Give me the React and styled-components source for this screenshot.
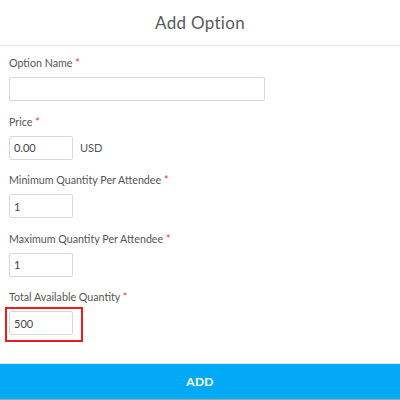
import React from "react"
import styled, { createGlobalStyle } from "styled-components"

const GlobalStyle = createGlobalStyle`
  html, body {
    margin: 0;
    padding: 0;
    background: #fff;
    font-family: Lato, "Open Sans", Arial, sans-serif;
  }
`

const Page = styled.div`
  width: 400px;
  height: 400px;
  display: flex;
  flex-direction: column;
  overflow: hidden;
`
const Header = styled.header`
  height: 45px;
  border-bottom: 1px solid #e6e6e6;
  display: flex;
  align-items: center;
  justify-content: center;
  >h1 {
    margin: 0;
    font-size: 17px;
    font-weight: 400;
    color: #5a5a5a;
    letter-spacing: 0.3px;
  }
`
const Form = styled.form`
  padding: 10px 9px 0;
`
const Field = styled.div`
  margin-bottom: 13.5px;
`
const Label = styled.label`
  display: block;
  font-size: 10.7px;
  line-height: 14px;
  color: #555;
  margin-bottom: 7px;
  >span {
    color: #e53935;
  }
`
const Row = styled.div`
  display: flex;
  align-items: center;
  gap: 7px;
`
const Input = styled.input`
  box-sizing: border-box;
  width: ${p => p.$wide ? "256px" : "64px"};
  height: 24px;
  border: 1px solid #d9d9d9;
  border-radius: 2px;
  padding: 0 4px;
  font-family: inherit;
  font-size: 11px;
  color: #444;
  outline: none;
`
const Unit = styled.span`
  font-size: 11px;
  color: #555;
`
const Highlight = styled.span`
  display: inline-block;
  border: 2px solid #ee1c1c;
  margin: -4px -10px -7px -4px;
  padding: 2px 8px 5px 2px;
  line-height: 0;
`
const Footer = styled.footer`
  margin-top: auto;
  border-top: 1px solid #e6e6e6;
`
const AddButton = styled.button`
  display: block;
  width: 100%;
  height: 36px;
  border: 0;
  border-bottom: 1px solid #9aa3a8;
  background: #02a9f4;
  color: #fff;
  font-family: inherit;
  font-weight: 700;
  font-size: 12px;
  letter-spacing: 0.3px;
  cursor: pointer;
`

const Required = ({ children }) => (
  <Label>{children} <span>*</span></Label>
)

export default function App() {
  return (
    <Page>
      <GlobalStyle />
      <Header><h1>Add Option</h1></Header>
      <Form>
        <Field>
          <Required>Option Name</Required>
          <Input $wide defaultValue="" />
        </Field>
        <Field>
          <Required>Price</Required>
          <Row>
            <Input defaultValue="0.00" />
            <Unit>USD</Unit>
          </Row>
        </Field>
        <Field>
          <Required>Minimum Quantity Per Attendee</Required>
          <Input defaultValue="1" />
        </Field>
        <Field>
          <Required>Maximum Quantity Per Attendee</Required>
          <Input defaultValue="1" />
        </Field>
        <Field>
          <Required>Total Available Quantity</Required>
          <Highlight><Input defaultValue="500" /></Highlight>
        </Field>
      </Form>
      <Footer>
        <AddButton type="button">ADD</AddButton>
      </Footer>
    </Page>
  )
}
